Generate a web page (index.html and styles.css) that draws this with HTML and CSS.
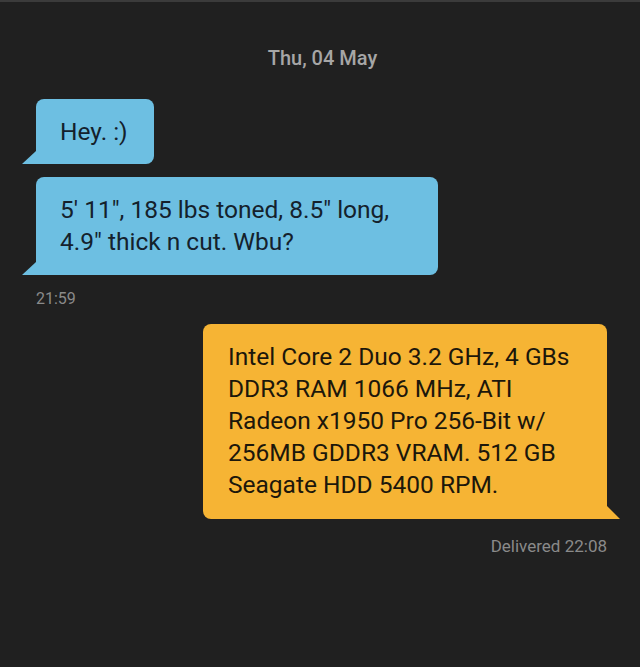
FILE: index.html
```html
<!DOCTYPE html>
<html lang="en">
<head>
<meta charset="utf-8">
<title>Chat</title>
<link rel="stylesheet" href="styles.css">
</head>
<body>
<main class="chat">
  <div class="date">Thu, 04 May</div>
  <div class="group incoming">
    <div class="bubble blue tail-left">Hey. :)</div>
    <div class="bubble blue tail-left wide">5' 11", 185 lbs toned, 8.5" long,<br>4.9" thick n cut. Wbu?</div>
    <div class="meta">21:59</div>
  </div>
  <div class="group outgoing">
    <div class="bubble orange tail-right wide">Intel Core 2 Duo 3.2 GHz, 4 GBs<br>DDR3 RAM 1066 MHz, ATI<br>Radeon x1950 Pro 256-Bit w/<br>256MB GDDR3 VRAM. 512 GB<br>Seagate HDD 5400 RPM.</div>
    <div class="meta">Delivered 22:08</div>
  </div>
</main>
</body>
</html>
```
FILE: styles.css
```css
html, body {
  margin: 0;
  padding: 0;
  background: #202020;
}
body {
  font-family: Roboto, "DejaVu Sans", sans-serif;
  min-height: 667px;
  border-top: 2px solid #3b3b3b;
  box-sizing: border-box;
}
.chat {
  display: flex;
  flex-direction: column;
  padding: 44px 33px 0 36px;
}
.date {
  text-align: center;
  color: #a6a6a6;
  font-size: 20px;
  font-weight: 500;
  line-height: 24px;
  padding-left: 2px;
  margin-bottom: 29px;
}
.group {
  display: flex;
  flex-direction: column;
  gap: 13px;
}
.incoming { align-items: flex-start; }
.outgoing { align-items: flex-end; margin-top: 15px; }
.bubble {
  position: relative;
  font-size: 24.5px;
  line-height: 32px;
  padding: 17px 26px 16px 24px;
  border-radius: 8px;
  white-space: nowrap;
}
.wide { box-sizing: border-box; }
.blue {
  background: #6dbfe2;
  color: #14212c;
}
.blue.wide { width: 402px; padding-bottom: 17px; }
.orange {
  background: #f6b434;
  color: #1c170b;
  width: 404px;
  padding: 17px 25px 18px 25px;
  box-sizing: border-box;
}
.tail-left { border-bottom-left-radius: 0; }
.tail-right { border-bottom-right-radius: 0; }
.tail-left::before {
  content: "";
  position: absolute;
  left: -14px;
  bottom: 0;
  border-bottom: 13px solid #6dbfe2;
  border-left: 14px solid transparent;
}
.tail-right::after {
  content: "";
  position: absolute;
  right: -13px;
  bottom: 0;
  border-bottom: 13px solid #f6b434;
  border-right: 13px solid transparent;
}
.meta {
  color: #8a8a8a;
  font-size: 16px;
  line-height: 20px;
}
.incoming .meta { margin-top: 1px; }
.outgoing .meta { margin-top: 4px; font-size: 17px; }
```
